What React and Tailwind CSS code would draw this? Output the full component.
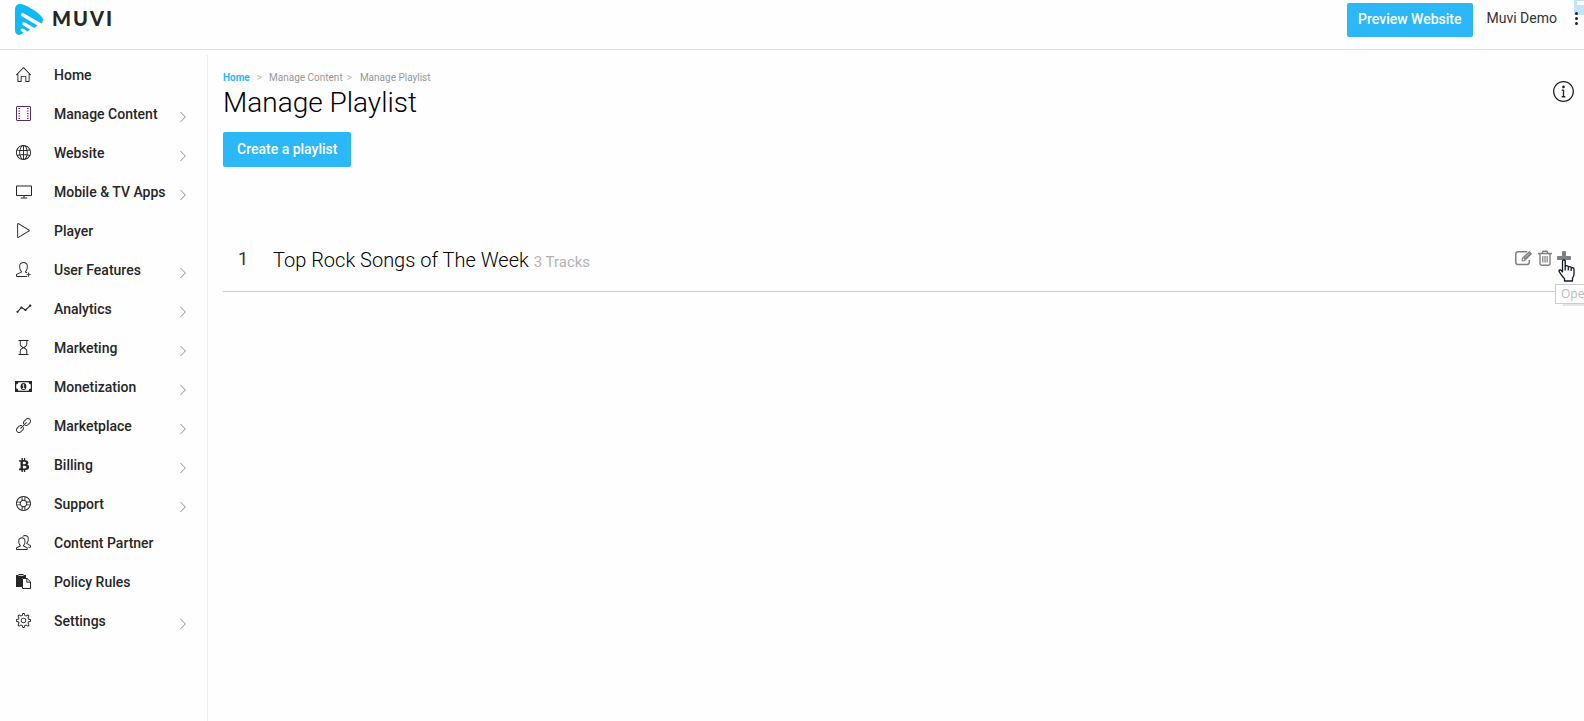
import { useState } from "react";
import {
  SlHome,
  SlGlobe,
  SlScreenDesktop,
  SlControlPlay,
  SlUserFollow,
  SlHourglass,
  SlLink,
  SlSupport,
  SlPeople,
  SlSettings,
  SlArrowRight,
  SlInfo,
} from "react-icons/sl";
import { FaBtc } from "react-icons/fa";

const FilmIcon = () => (
  <svg viewBox="0 0 15 15" className="size-[15px]" fill="none" stroke="#5a2a68">
    <rect x="0.500" y="0.500" width="14" height="14" rx="0.500" />
    <path stroke="#333" strokeWidth="1.500" strokeDasharray="1 1.500" d="M3.200 2v11.500M11.800 2v11.500" />
  </svg>
);

const TimelineIcon = () => (
  <svg viewBox="0 0 16 10" className="w-4 h-[10px]" fill="none" stroke="currentColor">
    <path d="M1.500 7.800 5.500 3.500 9.500 6 14 1.800" strokeWidth="1.100" />
    <g fill="currentColor" stroke="none">
      <circle cx="1.500" cy="7.800" r="1.100" />
      <circle cx="5.500" cy="3.500" r="1.100" />
      <circle cx="9.500" cy="6" r="1.100" />
      <circle cx="14.200" cy="1.600" r="1.200" />
    </g>
  </svg>
);

const MoneyIcon = () => (
  <svg viewBox="0 0 17 11" className="w-[17px] h-[11px]" fill="none">
    <path
      fill="currentColor"
      fillRule="evenodd"
      d="M0 0h17v11H0zM3.4 1.2A2.3 2.3 0 0 1 1.2 3.4v4.2a2.3 2.3 0 0 1 2.2 2.2h10.2a2.3 2.3 0 0 1 2.2-2.2V3.4a2.3 2.3 0 0 1-2.2-2.2z"
    />
    <ellipse cx="8.5" cy="5.5" rx="2.9" ry="3.5" fill="currentColor" />
    <path d="M7.4 4.2l1.2-.9v4M7.3 7.5h2.5" stroke="#fff" strokeWidth="0.9" />
  </svg>
);

const PasteIcon = () => (
  <svg viewBox="0 0 15 15" className="size-[15px]" fill="none">
    <path fill="currentColor" d="M0 1h2.500V0h5v1H10v3H6v9H0z" />
    <path stroke="#fefefe" strokeWidth="0.800" d="M2.500 1.500h5" />
    <path fill="#fff" stroke="currentColor" d="M6.500 4.500h4.700l3.300 3.300v6.700h-8zM10.800 4.700v3.500h3.500" />
  </svg>
);

const EditIcon = () => (
  <svg viewBox="0 0 18 16" className="w-[18px] h-4" fill="none" stroke="currentColor">
    <path
      strokeWidth="1.5"
      d="M12.3 1.8H3.2A2.4 2.4 0 0 0 .8 4.200v8A2.400 2.400 0 0 0 3.200 14.600h8.700a2.400 2.400 0 0 0 2.400-2.400V10"
    />
    <path
      fill="currentColor"
      stroke="none"
      fillRule="evenodd"
      d="M14.300.9 17.200 3.800 9.700 11.200H6.700V8.300zM7.800 8.900v1.300h1.300l.6-.6-1.300-1.300zM14 3.300 9.500 7.700l.3.300 4.500-4.400z"
    />
  </svg>
);

const TrashIcon = () => (
  <svg viewBox="0 0 14 16" className="w-[14px] h-4" fill="none" stroke="currentColor">
    <path strokeWidth="1.4" d="M0 3.500h14M4.200 3.200 5 1.200h4l.8 2M2 3.500v10.300q0 1.400 1.300 1.400h7.400q1.300 0 1.300-1.400V3.500" />
    <path strokeWidth="1.200" d="M4.800 6v6.500M7 6v6.500M9.200 6v6.500" />
  </svg>
);

const PlusIcon = () => (
  <svg viewBox="0 0 14 14" className="size-[14px]" fill="currentColor">
    <path d="M5.800 0h2.400q.8 0 .8.800V5h4.200q.8 0 .8.800v2.400q0 .8-.8.800H9v4.200q0 .8-.8.800H5.800q-.8 0-.8-.8V9H.8Q0 9 0 8.200V5.800Q0 5 .8 5H5V.8Q5 0 5.800 0z" />
  </svg>
);

const menu = [
  { label: "Home", icon: <SlHome size={15} /> },
  { label: "Manage Content", icon: <FilmIcon />, sub: true },
  { label: "Website", icon: <SlGlobe size={15} />, sub: true },
  { label: "Mobile & TV Apps", icon: <SlScreenDesktop size={16} />, sub: true },
  { label: "Player", icon: <SlControlPlay size={15} /> },
  { label: "User Features", icon: <SlUserFollow size={15} />, sub: true },
  { label: "Analytics", icon: <TimelineIcon />, sub: true },
  { label: "Marketing", icon: <SlHourglass size={15} />, sub: true },
  { label: "Monetization", icon: <MoneyIcon />, sub: true },
  { label: "Marketplace", icon: <SlLink size={15} />, sub: true },
  { label: "Billing", icon: <FaBtc size={14} />, sub: true },
  { label: "Support", icon: <SlSupport size={15} />, sub: true },
  { label: "Content Partner", icon: <SlPeople size={15} /> },
  { label: "Policy Rules", icon: <PasteIcon /> },
  { label: "Settings", icon: <SlSettings size={15} />, sub: true },
];

const Header = () => (
  <header className="h-[50px] flex items-start justify-between border-b border-[#e4e4e4] pl-[15px] overflow-hidden">
    <a href="#home" className="flex items-start gap-[9px] pt-1">
      <svg viewBox="0 0 28 31" className="w-7 h-[31px]">
        <path
          fill="#10b8f5"
          d="M0 5.500Q0 0 5.500 0 10 .3 19 6.300 27.500 12 28 15.500q0 2.500-1.500 4L9 9.400Q6.800 8.600 6.200 10q-.5 1.500 1 2.500L22.500 21.500l-3.200 2.400-8.700-5.200q-2.400-1.200-3.200.3-.6 1.500 1 2.500l6.800 4.100-2.800 1.800-4.200-2.600q-1.800-.8-2.500.6-.4 1.400 1 2.200l2 1.100Q5.500 31 4 31 0 30.500 0 26z"
        />
      </svg>
      <span className="font-['Lato',sans-serif] font-black text-xl leading-[29px] tracking-widest text-[#262626]">
        MUVI
      </span>
    </a>
    <div className="flex items-start pt-[3px]">
      <button className="h-[34px] px-[11px] pb-0.5 rounded-xs bg-[#2cb7f6] text-white text-sm font-medium">
        Preview Website
      </button>
      <span className="ml-[14px] text-sm leading-[30px]">Muvi Demo</span>
      <div className="relative ml-4 w-[11px] h-[30px]">
        <span className="absolute -top-[3px] right-0 w-[10px] h-[15px] bg-[#c3e5f8]">
          <span className="absolute top-px right-0 w-[7px] h-1 bg-white" />
        </span>
        <button aria-label="More" className="absolute left-[2px] top-[9px] flex flex-col gap-[2px]">
          <span className="size-[3px] rounded-full bg-[#222]" />
          <span className="size-[3px] rounded-full bg-[#222]" />
          <span className="size-[3px] rounded-full bg-[#222]" />
        </button>
      </div>
    </div>
  </header>
);

const Sidebar = () => (
  <nav className="w-[208px] shrink-0 border-r border-[#e4f1f0]">
    {menu.map((item) => (
      <a
        key={item.label}
        href="#menu"
        className="flex items-center h-[39px] pl-[15px] pr-[19px] text-sm font-medium text-[#262626]"
      >
        <span className="w-[39px] shrink-0">
          <span className="w-[17px] flex justify-center">{item.icon}</span>
        </span>
        <span className="flex-1 whitespace-nowrap">{item.label}</span>
        {item.sub && <SlArrowRight size={10} className="mt-[6px] text-[#888]" />}
      </a>
    ))}
  </nav>
);

const PlaylistRow = ({ index, playlist }) => (
  <div className="flex items-center h-[66px] pl-[15px] pr-[13px] border-b border-[#ccc]">
    <span className="w-[35px] text-lg leading-6">{index}</span>
    <h2 className="flex-1 pt-1 text-xl leading-6 font-light text-black">
      {playlist.title} <span className="text-[15px] font-normal text-[#b3b3b3]">{playlist.tracks} Tracks</span>
    </h2>
    <div className="relative flex items-center gap-[5px] pb-0.5 text-[#808080]">
      <button aria-label="Edit">
        <EditIcon />
      </button>
      <button aria-label="Delete">
        <TrashIcon />
      </button>
      <button aria-label="Open">
        <PlusIcon />
      </button>
      <div className="absolute left-10 top-[34px] h-5 w-[60px] pl-[5px] border border-[#ccc] bg-white text-xs leading-[18px] text-[#bbb] shadow-[8px_2px_0px_0px_#e6e6e6] font-['Open_Sans',sans-serif]">
        Ope
      </div>
      <svg viewBox="0 0 18 23" className="absolute left-[43px] top-[9px] w-[18px] h-[23px]">
        <path
          fill="#fff"
          stroke="#111827"
          strokeWidth="1.300"
          strokeLinejoin="round"
          d="M4.500 13V2.500Q4.500 1 5.800 1T7.200 2.500V8q0-1.400 1.500-1.400T10.300 8v.8q0-1.200 1.400-1.200t1.500 1.400v.8q0-1.100 1.300-1.100t1.500 1.400V15q0 2.500-1.500 4v3h-8v-2.500Q4.500 18 1.200 12.700.6 11.200 1.700 10.800q1.300-.3 2.800 2.200zM7.200 8v3.500M10.300 8.800v2.700M13.200 9.800v2.200"
        />
      </svg>
    </div>
  </div>
);

const App = () => {
  const [playlists] = useState([{ title: "Top Rock Songs of The Week", tracks: 3 }]);

  return (
    <div className="min-h-screen flex flex-col overflow-hidden bg-[#fefefe] text-[#333] font-['Roboto',sans-serif]">
      <Header />
      <div className="flex flex-1 pt-[5px]">
        <Sidebar />
        <main className="flex-1 min-w-0 pl-[15px] pt-[15px]">
          <div className="flex items-start justify-between">
            <div>
              {/* Breadcrumb */}
              <div className="flex text-[10px] leading-4 text-[#999]">
                <a href="#home" className="font-bold text-[#2cb7f6]">
                  Home
                </a>
                <span className="px-[7px] text-[#bbb]">&gt;</span>
                <a href="#content">Manage Content</a>
                <span className="pl-1 pr-2 text-[#bbb]">&gt;</span>
                <span>Manage Playlist</span>
              </div>
              <h1 className="text-[28px] leading-[34px] font-light text-black">Manage Playlist</h1>
            </div>
            <button aria-label="Info" className="mt-[11px] mr-[10px] text-[#222]">
              <SlInfo size={21} />
            </button>
          </div>
          <button className="mt-3 h-[35px] px-[14px] pb-0.5 rounded-xs bg-[#2cb7f6] text-white text-sm font-medium">
            Create a playlist
          </button>

          {/* Playlists */}
          <div className="mt-[59px]">
            {playlists.map((playlist, i) => (
              <PlaylistRow key={playlist.title} index={i + 1} playlist={playlist} />
            ))}
          </div>
        </main>
      </div>
    </div>
  );
};

export default App;
